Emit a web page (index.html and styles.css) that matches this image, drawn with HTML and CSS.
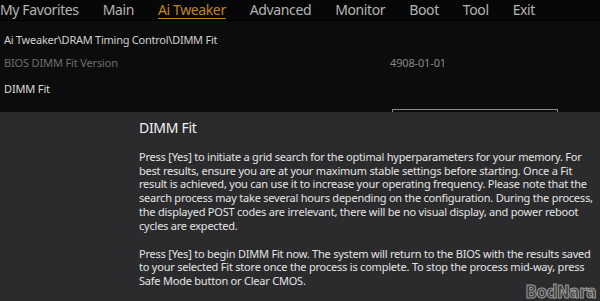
FILE: index.html
```html
<!DOCTYPE html>
<html lang="en">
<head>
    <meta charset="UTF-8">
    <meta name="viewport" content="width=device-width, initial-scale=1.0">
    <title>DIMM Fit</title>
    <link rel="stylesheet" href="styles.css">
</head>
<body>
    <div class="nav">
        <span class="tab">My Favorites</span>
        <span class="tab">Main</span>
        <span class="tab active">Ai Tweaker</span>
        <span class="tab">Advanced</span>
        <span class="tab">Monitor</span>
        <span class="tab">Boot</span>
        <span class="tab">Tool</span>
        <span class="tab">Exit</span>
    </div>
    <div class="content">
        <div class="path">Ai Tweaker\DRAM Timing Control\DIMM Fit</div>
        <div class="row dim">
            <span class="label">BIOS DIMM Fit Version</span>
            <span class="value">4908-01-01</span>
        </div>
        <div class="row">
            <span class="label">DIMM Fit</span>
        </div>
        <div class="select-box"></div>
    </div>
    <div class="help">
        <h2 class="help-title">DIMM Fit</h2>
        <p>Press [Yes] to initiate a grid search for the optimal hyperparameters for your memory. For best results, ensure you are at your maximum stable settings before starting. Once a Fit result is achieved, you can use it to increase your operating frequency. Please note that the search process may take several hours depending on the configuration. During the process, the displayed POST codes are irrelevant, there will be no visual display, and power reboot cycles are expected.</p>
        <p>Press [Yes] to begin DIMM Fit now. The system will return to the BIOS with the results saved to your selected Fit store once the process is complete. To stop the process mid-way, press Safe Mode button or Clear CMOS.</p>
        <div class="watermark">BodNara</div>
    </div>
</body>
</html>
```

FILE: styles.css
```css
body {
    margin: 0;
    width: 600px;
    height: 301px;
    overflow: hidden;
    background-color: #0c0c0c;
    font-family: "Noto Sans", "Open Sans", sans-serif;
    display: flex;
    flex-direction: column;
}
.nav {
    display: flex;
    gap: 24px;
    height: 22px;
    background-color: #070707;
    border-bottom: 1px solid #000;
    font-size: 14px;
    letter-spacing: -0.38px;
    line-height: 20px;
    color: #b4b4b4;
}
.tab.active {
    color: #c4841c;
    text-decoration: underline;
    text-decoration-thickness: 1px;
    text-underline-offset: 3px;
}
.content {
    padding: 7px 0 0 4px;
    font-size: 11px;
}
.path {
    height: 23px;
    line-height: 23px;
    letter-spacing: -0.25px;
    color: #d0d0d0;
}
.row {
    display: flex;
    height: 25.5px;
    line-height: 24px;
    letter-spacing: -0.15px;
    color: #dcdcdc;
}
.row.dim {
    color: #6e6e6e;
}
.row .label {
    width: 386px;
}
.row .value {
    color: #888;
}
.select-box {
    margin: 7px 0 0 388px;
    width: 164px;
    height: 2px;
    border: 1px solid #8a8a8a;
    border-bottom: none;
}
.help {
    position: relative;
    flex: 1;
    background-color: #2b2b2d;
    padding: 6px 4px 0 139px;
    color: #e4e4e4;
    font-size: 11px;
    letter-spacing: -0.22px;
    line-height: 13.7px;
}
.help-title {
    margin: 0 0 12px;
    font-size: 14px;
    letter-spacing: -0.3px;
    font-weight: normal;
    line-height: 20px;
    color: #f2f2f2;
}
.help p {
    margin: 0 0 14.5px;
}
.watermark {
    position: absolute;
    right: 4px;
    bottom: 1px;
    font-family: "DejaVu Sans Condensed", "DejaVu Sans", sans-serif;
    font-weight: bold;
    font-size: 17px;
    line-height: 18px;
    letter-spacing: -0.5px;
    color: #3c3c3c;
    -webkit-text-stroke: 1px #9a9a9a;
}
```
